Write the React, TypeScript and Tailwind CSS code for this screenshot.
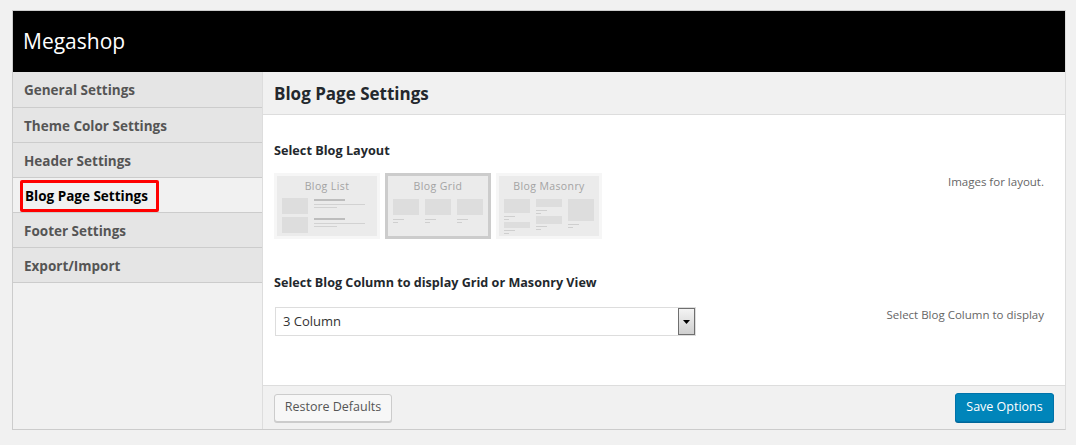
import React from "react";

const menu = [
  "General Settings",
  "Theme Color Settings",
  "Header Settings",
  "Blog Page Settings",
  "Footer Settings",
  "Export/Import",
];

function Thumb({ kind, selected }: { kind: "list" | "grid" | "masonry"; selected?: boolean }) {
  const label = kind === "list" ? "Blog List" : kind === "grid" ? "Blog Grid" : "Blog Masonry";
  const block = "#dddddd";
  const line = "#d2d2d2";
  return (
    <div
      className={`w-[106px] h-[66px] border-[3px] bg-[#ebebeb] ${
        selected ? "border-[#cccccc]" : "border-[#f6f6f6]"
      }`}
    >
      <svg width="100" height="60" viewBox="0 0 100 60" className="block">
        <text
          x="50"
          y="14"
          textAnchor="middle"
          fontSize="10.5"
          fill="#a3a3a3"
          fontFamily="'Open Sans', sans-serif"
          letterSpacing="0.4"
        >
          {label}
        </text>
        {kind === "list" && (
          <g>
            <rect x="5" y="22" width="26" height="16" fill={block} />
            <rect x="5" y="41" width="26" height="16" fill={block} />
            <rect x="37" y="23" width="31" height="2" fill="#bdbdbd" />
            <rect x="37" y="28" width="51" height="1" fill={line} />
            <rect x="37" y="31" width="23" height="1" fill={line} />
            <rect x="37" y="42" width="31" height="2" fill="#bdbdbd" />
            <rect x="37" y="47" width="51" height="1" fill={line} />
            <rect x="37" y="50" width="23" height="1" fill={line} />
          </g>
        )}
        {kind === "grid" && (
          <g>
            {[5, 37, 69].map((x) => (
              <g key={x}>
                <rect x={x} y="23" width="26" height="16" fill={block} />
                <rect x={x} y="43" width="11" height="1" fill="#cfcfcf" />
                <rect x={x} y="46" width="5" height="1" fill="#cfcfcf" />
              </g>
            ))}
          </g>
        )}
        {kind === "masonry" && (
          <g>
            <rect x="5" y="23" width="26" height="14" fill={block} />
            <rect x="5" y="40" width="11" height="1" fill="#cfcfcf" />
            <rect x="5" y="43" width="5" height="1" fill="#cfcfcf" />
            <rect x="5" y="46" width="26" height="6" fill={block} />
            <rect x="5" y="54" width="11" height="1" fill="#cfcfcf" />
            <rect x="5" y="57" width="5" height="1" fill="#cfcfcf" />
            <rect x="37" y="23" width="26" height="8" fill={block} />
            <rect x="37" y="34" width="11" height="1" fill="#cfcfcf" />
            <rect x="37" y="37" width="5" height="1" fill="#cfcfcf" />
            <rect x="37" y="40" width="26" height="8" fill={block} />
            <rect x="37" y="50" width="11" height="1" fill="#cfcfcf" />
            <rect x="37" y="53" width="5" height="1" fill="#cfcfcf" />
            <rect x="69" y="23" width="26" height="22" fill={block} />
            <rect x="69" y="48" width="11" height="1" fill="#cfcfcf" />
            <rect x="69" y="51" width="5" height="1" fill="#cfcfcf" />
          </g>
        )}
      </svg>
    </div>
  );
}

export default function App() {
  return (
    <div
      className="min-h-[445px] bg-[#f1f1f1] pt-[10px] pl-[12px]"
      style={{ fontFamily: "'Open Sans', 'Noto Sans', sans-serif" }}
    >
      <div className="w-[1054px] h-[420px] border border-[#cccccc] border-r-[#dddddd] flex flex-col">
        <div className="h-[61px] shrink-0 bg-black flex items-center px-[10px] text-white text-[21px] leading-none">
          Megashop
        </div>
        <div className="flex flex-1 min-h-0">
          <div className="w-[250px] shrink-0 border-r border-[#dddddd] bg-[#f1f1f1]">
            {menu.map((m, i) => {
              const active = m === "Blog Page Settings";
              return (
                <div
                  key={m}
                  className={`${i === 0 ? "h-[36px]" : "h-[35px]"} border-b border-[#cccccc] flex items-center text-[13.5px] font-bold ${
                    active ? "bg-[#f1f1f1] pl-[7px] text-black" : "bg-[#e5e5e5] pl-[11px] pt-[2px] text-[#555555]"
                  }`}
                >
                  {active ? (
                    <span className="h-[32px] w-[139px] flex items-center border-[3px] border-[#ff0000] rounded-[2px] px-[2px] mt-[1px] pt-[1px]">
                      {m}
                    </span>
                  ) : (
                    m
                  )}
                </div>
              );
            })}
          </div>
          <div className="flex-1 flex flex-col min-w-0">
            <div className="h-[43px] shrink-0 bg-[#f1f1f1] border-b border-[#dddddd] flex items-center pl-[11px] pt-[1px] text-[17px] font-bold text-[#23282d]">
              Blog Page Settings
            </div>
            <div className="flex-1 bg-white pl-[11px] pr-[21px] pt-[25px]">
              <div className="flex justify-between">
                <div>
                  <div className="text-[12.7px] leading-[20px] font-bold text-[#23282d]">Select Blog Layout</div>
                  <div className="mt-[13px] flex gap-[5px]">
                    <Thumb kind="list" />
                    <Thumb kind="grid" selected />
                    <Thumb kind="masonry" />
                  </div>
                </div>
                <div className="pt-[32px] text-[11.5px] leading-[20px] text-[#666666]">Images for layout.</div>
              </div>
              <div className="flex justify-between mt-[34px]">
                <div>
                  <div className="text-[12.6px] leading-[20px] font-bold text-[#23282d]">
                    Select Blog Column to display Grid or Masonry View
                  </div>
                  <div className="mt-[14px] ml-[1px] w-[421px] h-[29px] border border-[#dddddd] flex items-stretch">
                    <div className="flex-1 flex items-center pl-[7px] text-[13px] text-[#333333]">3 Column</div>
                    <div className="w-[17px] border border-[#6f6f6f] bg-gradient-to-b from-[#f4f4f4] to-[#cfcfcf] flex items-center justify-center">
                      <svg width="7" height="4" viewBox="0 0 7 4">
                        <polygon points="0,0 7,0 3.5,4" fill="#000" />
                      </svg>
                    </div>
                  </div>
                </div>
                <div className="pt-[32px] text-[11.5px] leading-[20px] text-[#666666]">Select Blog Column to display</div>
              </div>
            </div>
            <div className="h-[44px] shrink-0 bg-[#f1f1f1] border-t border-[#dddddd] flex items-center justify-between pl-[11px] pr-[11px]">
              <button className="h-[28px] w-[118px] border border-[#cccccc] bg-[#f7f7f7] rounded-[3px] shadow-[0_1px_0_#cccccc] text-[12.5px] text-[#555555]">
                Restore Defaults
              </button>
              <button className="h-[29px] w-[99px] border border-[#0073aa] bg-[#0085ba] rounded-[3px] shadow-[0_1px_0_#006799] text-[12.5px] text-white">
                Save Options
              </button>
            </div>
          </div>
        </div>
      </div>
    </div>
  );
}
